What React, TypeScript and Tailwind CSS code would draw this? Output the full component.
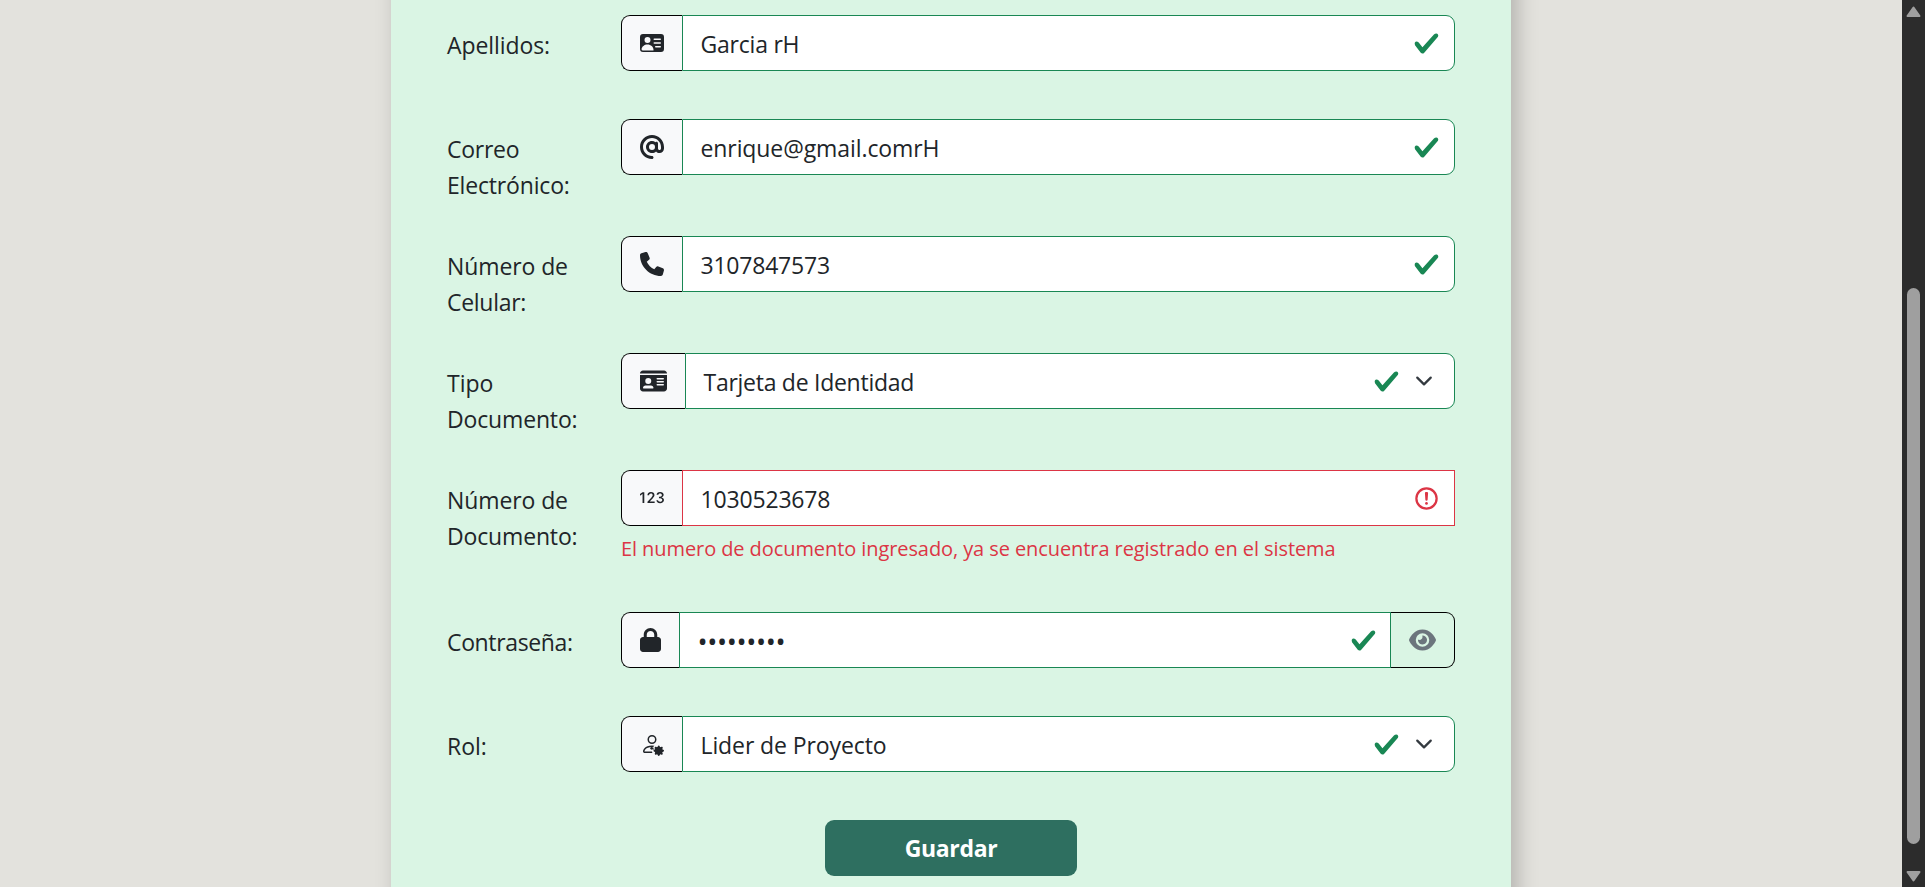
import type { ReactNode } from "react";
import { Bs123, BsPersonGear, BsPersonVcardFill } from "react-icons/bs";
import { FaAt, FaEye, FaIdCard, FaLock, FaPhone } from "react-icons/fa6";

function ValidIcon() {
  return (
    <svg viewBox="0 0 8 8" className="size-[27px] shrink-0">
      <path
        fill="#198754"
        d="M2.3 6.73.6 4.53c-.4-1.04.46-1.4 1.1-.8l1.1 1.4 3.4-3.8c.6-.63 1.6-.27 1.2.7l-4 4.6c-.43.5-.8.4-1.1.1z"
      />
    </svg>
  );
}

function InvalidIcon() {
  return (
    <svg viewBox="0 0 12 12" fill="none" stroke="#dc3545" className="size-[27px] shrink-0">
      <circle cx="6" cy="6" r="4.5" />
      <path strokeLinejoin="round" d="M5.8 3.6h.4L6 6.5z" />
      <circle cx="6" cy="8.2" r=".6" fill="#dc3545" stroke="none" />
    </svg>
  );
}

function Chevron() {
  return (
    <svg viewBox="0 0 16 16" className="ml-3 mr-1 h-[18px] w-6 shrink-0">
      <path
        fill="none"
        stroke="#343a40"
        strokeLinecap="round"
        strokeLinejoin="round"
        strokeWidth="2"
        d="m2 5 6 6 6-6"
      />
    </svg>
  );
}

function RoleIcon() {
  return (
    <svg viewBox="0 0 16 16" fill="currentColor" className="size-6">
      <BsPersonGear size={16} />
      <circle cx="12.4" cy="12.4" r="2.4" />
      <circle cx="7.8" cy="10.9" r=".9" />
      <path d="M8.4 10.4h1.2v1.6H8.4z" opacity=".5" />
    </svg>
  );
}

type FieldProps = {
  label: ReactNode;
  icon: ReactNode;
  value: ReactNode;
  rowClass: string;
  addonClass?: string;
  select?: boolean;
  error?: ReactNode;
  trailing?: ReactNode;
};

function Field({ label, icon, value, rowClass, addonClass = "w-[61px]", select, error, trailing }: FieldProps) {
  const corners = error || trailing ? "" : "rounded-r-[9px]";
  const border = error ? "border-[#dc3545]" : "border-[#198754]";
  const padding = trailing ? "pr-[13px]" : "pr-3.5";
  return (
    <div className={`flex items-start ${rowClass}`}>
      <div className="w-[174px] shrink-0 pt-3 leading-9">{label}</div>
      <div className="flex-1">
        <div className="flex h-14">
          <div
            className={`flex shrink-0 items-center rounded-l-[9px] border border-r-0 border-black bg-[#f8f9fa] pl-[18px] text-2xl ${addonClass}`}
          >
            {icon}
          </div>
          <div className={`flex flex-1 items-center border bg-white pl-[17.5px] ${padding} ${border} ${corners}`}>
            <div className="flex-1 whitespace-nowrap pt-0.5 leading-9">{value}</div>
            {error ? <InvalidIcon /> : <ValidIcon />}
            {select && <Chevron />}
          </div>
          {trailing}
        </div>
        {error}
      </div>
    </div>
  );
}

function ScrollBar() {
  return (
    <div className="flex w-[23px] shrink-0 flex-col items-center bg-[#2c2c2c]">
      <svg viewBox="0 0 15 12" className="mt-1.5 h-3 w-[15px] shrink-0">
        <path d="M7.5 1.5 13.5 10h-12z" fill="#9f9f9f" stroke="#9f9f9f" strokeWidth="2" strokeLinejoin="round" />
      </svg>
      <div className="mt-[270px] h-[556px] w-[13px] rounded-full bg-[#9f9f9f]" />
      <svg viewBox="0 0 15 12" className="mt-[26px] h-3 w-[15px] shrink-0">
        <path d="M7.5 10.5 1.5 2h12z" fill="#9f9f9f" stroke="#9f9f9f" strokeWidth="2" strokeLinejoin="round" />
      </svg>
    </div>
  );
}

export default function App() {
  return (
    <div className="flex h-[887px] w-[1925px] overflow-hidden bg-[#e3e2dd] font-['Open_Sans','Noto_Sans',sans-serif] text-[23px] text-[#212529]">
      <main className="flex flex-1 overflow-hidden pl-[391px]">
        <form className="-mb-10 -mt-10 flex w-[1120px] shrink-0 flex-col bg-[#daf5e4] pl-14 pr-14 pt-[55px] shadow-[6px_0_20px_rgba(0,0,0,0.22)]">
          <Field
            rowClass="h-[104px]"
            label={<span className="tracking-[-0.08px]">Apellidos:</span>}
            icon={<BsPersonVcardFill />}
            value={<span className="tracking-[-0.22px]">Garcia rH</span>}
          />
          <Field
            rowClass="h-[117px]"
            label={
              <>
                <span className="block tracking-[-0.27px]">Correo</span>
                <span className="block tracking-[-0.17px]">Electrónico:</span>
              </>
            }
            icon={<FaAt />}
            value={<span className="tracking-[-0.09px]">enrique@gmail.comrH</span>}
          />
          <Field
            rowClass="h-[117px]"
            label={
              <>
                <span className="block tracking-[-0.1px]">Número de</span>
                <span className="block tracking-[-0.29px]">Celular:</span>
              </>
            }
            icon={<FaPhone />}
            value={<span className="tracking-[-0.22px]">3107847573</span>}
          />
          <Field
            rowClass="h-[117px]"
            addonClass="w-16"
            label={
              <>
                <span className="block">Tipo</span>
                <span className="block tracking-[-0.16px]">Documento:</span>
              </>
            }
            icon={<FaIdCard className="h-6 w-[27px]" />}
            value={<span className="tracking-[-0.27px]">Tarjeta de Identidad</span>}
            select
          />
          <Field
            rowClass="h-[142px]"
            label={
              <>
                <span className="block tracking-[-0.1px]">Número de</span>
                <span className="block tracking-[-0.16px]">Documento:</span>
              </>
            }
            icon={<Bs123 />}
            value={<span className="tracking-[-0.17px]">1030523678</span>}
            error={
              <p className="mt-[7px] whitespace-nowrap text-xl leading-8 tracking-[-0.084px] text-[#dc3545]">
                El numero de documento ingresado, ya se encuentra registrado en el sistema
              </p>
            }
          />
          <Field
            rowClass="h-[104px]"
            addonClass="w-[58px]"
            label={<span className="tracking-[-0.36px]">Contraseña:</span>}
            icon={<FaLock className="h-6 w-[21px]" />}
            value={<span className="block pt-0.5 text-[27px] leading-9 tracking-[-0.4px]">•••••••••</span>}
            trailing={
              <button
                type="button"
                className="flex w-16 shrink-0 items-center rounded-r-[9px] border border-l-0 border-black pl-[18px] text-2xl text-[#6c757d]"
              >
                <FaEye className="h-6 w-[27px]" />
              </button>
            }
          />
          <Field
            rowClass="h-[104px]"
            label={<span className="tracking-[-0.05px]">Rol:</span>}
            icon={<RoleIcon />}
            value={<span className="tracking-[-0.1px]">Lider de Proyecto</span>}
            select
          />
          <button
            type="button"
            className="ml-[378px] h-14 w-[252px] shrink-0 rounded-[9px] bg-[#2e6f60] pt-px font-bold tracking-[-0.34px] text-white"
          >
            Guardar
          </button>
        </form>
      </main>
      <ScrollBar />
    </div>
  );
}
